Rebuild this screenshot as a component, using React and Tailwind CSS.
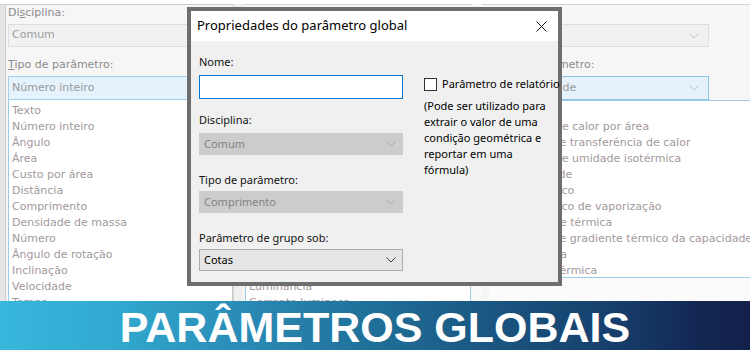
import React from 'react';

const leftItems = ['Texto', 'Número inteiro', 'Ângulo', 'Área', 'Custo por área', 'Distância', 'Comprimento', 'Densidade de massa', 'Número', 'Ângulo de rotação', 'Inclinação', 'Velocidade', 'Tempo'];
const middleItems = ['Corrente', 'Potencial elétrico', 'Frequência', 'Iluminância', 'Densidade de potência', 'Resistência elétrica', 'Potência', 'Temperatura de cor', 'Eficácia', 'Fator de demanda', 'Intensidade luminosa', 'Luminância', 'Corrente luminosa'];
const rightItems = ['Energia', 'Intensidade de calor por área', 'Coeficiente de transferência de calor', 'Permeância de umidade isotérmica', 'Permeabilidade', 'Calor específico', 'Calor específico de vaporização', 'Condutividade térmica', 'Coeficiente de gradiente térmico da capacidade', 'Massa térmica', 'Capacidade térmica'];

function Chevron({ color = '#b5b5b5' }) {
  return (
    <svg width="10" height="6" viewBox="0 0 10 6" className="shrink-0">
      <path d="M0.5 0.5 L5 5 L9.5 0.5" fill="none" stroke={color} strokeWidth="1" />
    </svg>
  );
}

// faded property panel behind the dialog
function Panel({ select, items, listClass, width }) {
  return (
    <div className={`${width} shrink-0 flex flex-col`}>
      <div className="shrink-0 h-[15px] leading-[15px] text-[#8c8c8c] whitespace-nowrap">
        Di<span className="underline">s</span>ciplina:
      </div>
      <div className="shrink-0 mt-[4px] h-[23px] flex items-center justify-between px-[3px] bg-[#f1f1f1] border border-[#dedede] text-[#9d9d9d]">
        <span>Comum</span>
        <Chevron color="#c4c4c4" />
      </div>
      <div className="shrink-0 mt-[10px] h-[16px] leading-[16px] text-[#8c8c8c] whitespace-nowrap">
        <span className="underline">T</span>ipo de parâmetro:
      </div>
      <div className="shrink-0 mt-[3px] h-[24px] flex items-center justify-between px-[3px] bg-[#e5f1fb] border border-[#a4d0ee] text-[#9a9a9a] whitespace-nowrap">
        <span>{select}</span>
        <Chevron color="#b8c4cc" />
      </div>
      <div className={`shrink-0 bg-white pt-[3px] ${listClass}`}>
        {items.map((t) => (
          <div key={t} className="h-[16px] leading-[16px] pl-[3px] text-[#a3999c] whitespace-nowrap">{t}</div>
        ))}
      </div>
    </div>
  );
}

function Field({ label, children, gap }) {
  return (
    <>
      <div className="h-[16px] leading-[16px] text-[#111111]">{label}</div>
      <div className={gap}>{children}</div>
    </>
  );
}

function Select({ value, disabled }) {
  return (
    <div className={`h-[22px] w-[204px] flex items-center justify-between pl-[4px] pr-[6px] border ${disabled ? 'bg-[#cccccc] border-[#cccccc] text-[#838383]' : 'bg-[#e5e5e5] border-[#acacac] text-black'}`}>
      <span>{value}</span>
      <Chevron color={disabled ? '#a8a8a8' : '#3c3c3c'} />
    </div>
  );
}

export default function App() {
  return (
    <div className="relative w-[750px] h-[350px] overflow-hidden bg-white flex flex-col text-[11px] [font-family:'DejaVu_Sans',Verdana,sans-serif]">
      {/* background panels */}
      <div className="shrink-0 h-[301px] pt-[4px] flex overflow-hidden">
        <div className="w-[5px] shrink-0 border-t border-[#d3d3d3] bg-[#e4e4e4]" />
        <div className="w-[228px] shrink-0 flex border-l border-t border-[#cdcdcd] pl-[2px] bg-[#f6f6f6]">
          <Panel width="w-[225px]" select="Número inteiro" items={leftItems} listClass="border-l border-l-[#9ccbea] border-r border-r-[#c9c9c9]" />
        </div>
        <div className="w-[10px] shrink-0 bg-[#efefef] border-l border-[#d8d8d8]" />
        <div className="w-[229px] shrink-0 flex pl-[2px] bg-[#f6f6f6] border-t border-[#d3d3d3]">
          <Panel width="w-[226px]" select="Corrente" items={middleItems} listClass="border-l border-r border-[#9ccbea]" />
        </div>
        <div className="w-[10px] shrink-0 bg-[#f9f9f9]" />
        <div className="flex-1 flex pl-[7px] bg-[#f6f6f6] border-t border-[#d3d3d3]">
          <div className="flex-1 flex flex-col">
            <div className="shrink-0 h-[15px] leading-[15px] text-[#8c8c8c]">Disciplina:</div>
            <div className="shrink-0 w-[220px] mt-[4px] h-[23px] flex items-center justify-between pl-[1px] pr-[9px] bg-[#f1f1f1] border border-[#dedede] text-[#9d9d9d]">
              <span>Comum</span>
              <Chevron color="#c4c4c4" />
            </div>
            <div className="shrink-0 mt-[10px] h-[16px] leading-[16px] text-[#8c8c8c] whitespace-nowrap">Tipo de parâmetro:</div>
            <div className="shrink-0 w-[220px] mt-[3px] h-[24px] flex items-center justify-between pl-[1px] pr-[9px] bg-[#e5f1fb] border border-[#8cc4e8] text-[#9a9a9a]">
              <span>Permeabilidade</span>
              <Chevron color="#b8c4cc" />
            </div>
            <div className="shrink-0 -ml-[4px] h-[178px] bg-white border-t border-b border-[#9ccbea] pt-[2px] pl-[2px]">
              {rightItems.map((t) => (
                <div key={t} className="h-[16px] leading-[16px] text-[#a3999c] whitespace-nowrap">{t}</div>
              ))}
            </div>
            <div className="flex-1 bg-[#fbfbfb]" />
          </div>
        </div>
      </div>

      {/* banner */}
      <div className="shrink-0 h-[49px] flex justify-center pt-[5px] bg-[linear-gradient(90deg,#37b7db_0%,#31a8cf_16%,#2a8ab5_33%,#1f6f98_50%,#1a5580_66%,#163e6b_82%,#132753_93%,#12204b_100%)]">
        <span className="text-[43px] leading-[43px] font-bold text-white [font-family:'Liberation_Sans',Arial,sans-serif]">PARÂMETROS GLOBAIS</span>
      </div>

      {/* dialog */}
      <div className="absolute left-[187px] top-[7px] w-[375px] h-[279px] border-[4px] border-[#6e6e6e] bg-[#f0f0f0] flex flex-col [font-family:'Noto_Sans',sans-serif] text-[11px]">
        <div className="h-[30px] shrink-0 bg-white flex items-center justify-between pl-[6px] pr-[11px]">
          <span className="text-[13px] text-black">Propriedades do parâmetro global</span>
          <svg width="11" height="11" viewBox="0 0 11 11">
            <path d="M0.5 0.5 L10.5 10.5 M10.5 0.5 L0.5 10.5" stroke="#1a1a1a" strokeWidth="1" fill="none" />
          </svg>
        </div>
        <div className="flex-1 flex pl-[8px]">
          <div className="w-[204px] flex flex-col pt-[13px]">
            <Field label="Nome:" gap="mt-[5px]">
              <div className="h-[24px] w-[204px] bg-white border border-[#0078d7]" />
            </Field>
            <div className="mt-[13px]">
              <Field label="Disciplina:" gap="mt-[5px]">
                <Select value="Comum" disabled />
              </Field>
            </div>
            <div className="mt-[17px]">
              <Field label="Tipo de parâmetro:" gap="mt-[3px]">
                <Select value="Comprimento" disabled />
              </Field>
            </div>
            <div className="mt-[17px]">
              <Field label="Parâmetro de grupo sob:" gap="mt-[3px]">
                <Select value="Cotas" />
              </Field>
            </div>
          </div>
          <div className="ml-[21px] flex-1 pt-[35px] text-black">
            <div className="h-[16px] flex items-center whitespace-nowrap">
              <span className="w-[13px] h-[13px] bg-white border border-[#333333] shrink-0" />
              <span className="ml-[5px] leading-[16px]">Parâmetro de relatório</span>
            </div>
            <p className="mt-[6px] leading-[16px]">
              (Pode ser utilizado para<br />
              extrair o valor de uma<br />
              condição geométrica e<br />
              reportar em uma<br />
              fórmula)
            </p>
          </div>
        </div>
      </div>
    </div>
  );
}
